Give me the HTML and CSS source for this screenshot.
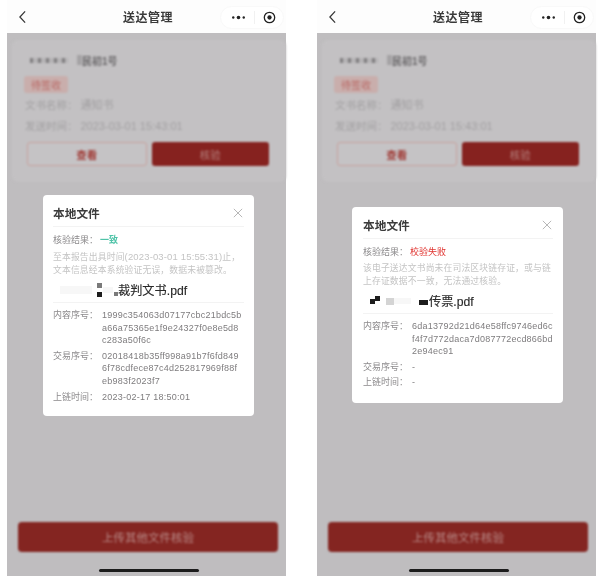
FILE: index.html
```html
<!DOCTYPE html>
<html lang="zh">
<head>
<meta charset="utf-8">
<title>送达管理</title>
<link rel="stylesheet" href="styles.css">
</head>
<body>
<main class="stage">
  <section class="phone">
    <header class="nav">
      <svg class="back" viewBox="0 0 10 16"><path d="M8 1.5 2 8l6 6.5"/></svg>
      <h1 class="nav-title">送达管理</h1>
      <div class="capsule">
        <svg class="more" viewBox="0 0 20 6"><circle cx="3" cy="3" r="1.6"/><circle cx="10" cy="3" r="2.4"/><circle cx="17" cy="3" r="1.6"/></svg>
        <i class="capsule-line"></i>
        <svg class="target" viewBox="0 0 14 14"><circle cx="7" cy="7" r="5.6"/><circle class="dot" cx="7" cy="7" r="2.3"/></svg>
      </div>
    </header>
    <div class="content">
      <article class="card">
        <div class="case"><span class="mask"></span><span class="mask short"></span><span>民初1号</span></div>
        <span class="tag">待签收</span>
        <p class="meta">文书名称：<span class="val">通知书</span></p>
        <p class="meta">发送时间：<span class="val">2023-03-01 15:43:01</span></p>
        <div class="actions"><span class="btn ghost">查看</span><span class="btn solid">核验</span></div>
      </article>
      <div class="footer">
        <span class="upload">上传其他文件核验</span>
        <i class="home"></i>
      </div>
    </div>
    <aside class="modal modal-a">
      <div class="modal-head"><h2>本地文件</h2><svg class="close" viewBox="0 0 12 12"><path d="M1 1l10 10M11 1 1 11"/></svg></div>
      <div class="result"><span class="label">核验结果：</span><span class="ok">一致</span></div>
      <p class="desc">至本报告出具时间<span class="num">(2023-03-01 15:55:31)</span>止，<br>文本信息经本系统验证无误，数据未被篡改。</p>
      <div class="file"><i class="px fade wide"></i><i class="px-stack"><i class="px grey"></i><i class="px dark"></i></i><i class="px fade"></i><i class="px grey low"></i><span>裁判文书.pdf</span></div>
      <dl class="rows">
        <div class="row"><dt>内容序号：</dt><dd>1999c354063d07177cbc21bdc5b<br>a66a75365e1f9e24327f0e8e5d8<br>c283a50f6c</dd></div>
        <div class="row"><dt>交易序号：</dt><dd>02018418b35ff998a91b7f6fd849<br>6f78cdfece87c4d252817969f88f<br>eb983f2023f7</dd></div>
        <div class="row"><dt>上链时间：</dt><dd>2023-02-17 18:50:01</dd></div>
      </dl>
    </aside>
  </section>

  <section class="phone">
    <header class="nav">
      <svg class="back" viewBox="0 0 10 16"><path d="M8 1.5 2 8l6 6.5"/></svg>
      <h1 class="nav-title">送达管理</h1>
      <div class="capsule">
        <svg class="more" viewBox="0 0 20 6"><circle cx="3" cy="3" r="1.6"/><circle cx="10" cy="3" r="2.4"/><circle cx="17" cy="3" r="1.6"/></svg>
        <i class="capsule-line"></i>
        <svg class="target" viewBox="0 0 14 14"><circle cx="7" cy="7" r="5.6"/><circle class="dot" cx="7" cy="7" r="2.3"/></svg>
      </div>
    </header>
    <div class="content">
      <article class="card">
        <div class="case"><span class="mask"></span><span class="mask short"></span><span>民初1号</span></div>
        <span class="tag">待签收</span>
        <p class="meta">文书名称：<span class="val">通知书</span></p>
        <p class="meta">发送时间：<span class="val">2023-03-01 15:43:01</span></p>
        <div class="actions"><span class="btn ghost">查看</span><span class="btn solid">核验</span></div>
      </article>
      <div class="footer">
        <span class="upload">上传其他文件核验</span>
        <i class="home"></i>
      </div>
    </div>
    <aside class="modal modal-b">
      <div class="modal-head"><h2>本地文件</h2><svg class="close" viewBox="0 0 12 12"><path d="M1 1l10 10M11 1 1 11"/></svg></div>
      <div class="result"><span class="label">核验结果：</span><span class="fail">校验失败</span></div>
      <p class="desc">该电子送达文书尚未在司法区块链存证，或与链<br>上存证数据不一致，无法通过核验。</p>
      <div class="file"><i class="px dark"></i><i class="px dark up"></i><i class="px fade mid"></i><i class="px fade"></i><i class="gap"></i><i class="px dark bar"></i><span>传票.pdf</span></div>
      <dl class="rows">
        <div class="row"><dt>内容序号：</dt><dd>6da13792d21d64e58ffc9746ed6c<br>f4f7d772daca7d087772ecd866bd<br>2e94ec91</dd></div>
        <div class="row"><dt>交易序号：</dt><dd>-</dd></div>
        <div class="row"><dt>上链时间：</dt><dd>-</dd></div>
      </dl>
    </aside>
  </section>
</main>
</body>
</html>
```
FILE: styles.css
```css
* { box-sizing: border-box; }
html, body { margin: 0; padding: 0; background: #fff; }
body { font-family: "Liberation Sans", "Noto Sans CJK SC", sans-serif; }
h1, h2, p, dl, dd, dt { margin: 0; font-weight: normal; }
i { display: block; }

.stage { display: flex; gap: 31px; width: 600px; height: 578px; padding-left: 7px; overflow: hidden; }
.phone { position: relative; display: flex; flex-direction: column; flex: none; width: 279px; height: 576px; }

.nav { position: relative; display: flex; align-items: center; justify-content: center; flex: none; height: 33px; padding-left: 3px; background: #fdfdfd; }
.nav-title { font-size: 12px; font-weight: 700; color: #3a3a3a; letter-spacing: .5px; filter: blur(.3px); }
.back { position: absolute; left: 11px; top: 10px; width: 9px; height: 14px; fill: none; stroke: #333; stroke-width: 1.4; }
.capsule { position: absolute; right: 2px; top: 6px; display: flex; align-items: center; justify-content: space-between; width: 64px; height: 23px; padding: 0 7px 0 10px; border: 1px solid #f9f9f9; border-radius: 12px; background: #fff; }
.more { width: 15px; height: 5px; fill: #222; }
.capsule-line { width: 1px; height: 13px; background: #f1f1f1; }
.target { width: 13px; height: 13px; fill: none; stroke: #222; stroke-width: 1.4; }
.target .dot { fill: #222; stroke: none; }

.content { display: flex; flex-direction: column; flex: 1; padding: 7px 0 0 5px; background: #bfbdbf; }
.card { display: flex; flex-direction: column; align-items: flex-start; height: 142px; padding: 11px 0 0 12px; border-radius: 6px; background: #c3c1c3; filter: blur(1px); }
.case { display: flex; align-items: center; gap: 9px; height: 18px; padding-left: 6px; font-size: 10px; font-weight: 700; color: #6a686a; }
.mask { width: 38px; height: 5px; background: repeating-linear-gradient(90deg, #807e80 0 3px, #b5b3b5 3px 8px); }
.mask.short { width: 5px; height: 10px; margin-right: -9px; background: #a5a3a5; }
.tag { display: flex; align-items: center; height: 17px; margin-top: 7px; padding: 0 7px; border-radius: 3px; background: #c9aeac; font-size: 10px; color: #bb6a66; }
.meta { height: 21px; padding-top: 5px; padding-left: 1px; font-size: 10.5px; line-height: 14px; white-space: nowrap; color: #a2a0a2; }
.val { margin-left: 3px; font-size: 11px; }
.actions { display: flex; gap: 5px; width: 242px; margin: 7px 0 0 3px; }
.btn { display: flex; align-items: center; justify-content: center; flex: 1; height: 24px; border-radius: 3px; font-size: 10.5px; }
.ghost { border: 1px solid #c7a19e; background: #c5c3c5; color: #a03a35; font-weight: 700; }
.solid { background: #86221f; color: #b4807d; }

.footer { display: flex; flex-direction: column; align-items: center; margin-top: auto; padding: 0 0 4px; }
.upload { display: flex; align-items: center; justify-content: center; width: 260px; height: 30px; margin-left: -2px; border-radius: 4px; background: #842521; color: #b98b88; font-size: 11.5px; filter: blur(.9px); }
.home { width: 100px; height: 3px; margin-top: 17px; margin-left: -1px; border-radius: 2px; background: #1c1c1c; }

.modal { position: absolute; width: 211px; padding: 0 10px; border-radius: 4px; background: #fff; color: #8c8a8c; font-size: 9px; filter: blur(.3px); }
.modal-a { left: 36px; top: 195px; height: 221px; }
.modal-b { left: 35px; top: 207px; height: 196px; padding-left: 11px; }
.modal-head { display: flex; align-items: center; justify-content: space-between; height: 32px; padding-top: 4px; border-bottom: 1px solid #f3f3f3; }
.modal-head h2 { font-size: 11.7px; font-weight: 700; color: #3b3b3b; }
.close { width: 10px; height: 10px; margin-right: 1px; fill: none; stroke: #a8a8a8; stroke-width: 1; }
.result { height: 16px; margin-top: 5px; line-height: 16px; white-space: nowrap; }
.label { color: #8c8a8c; }
.ok { margin-left: 2px; color: #4fc3a8; font-weight: 700; }
.fail { margin-left: 2px; color: #e0312d; }
.desc { margin-top: 2px; font-size: 8.8px; line-height: 13px; color: #c4c4c4; white-space: nowrap; letter-spacing: .15px; }
.num { font-size: 9.5px; }
.file { display: flex; align-items: center; height: 26px; padding: 1px 0 0 7px; border-bottom: 1px solid #f3f3f3; font-size: 12.2px; color: #2a2a2a; -webkit-text-stroke: .15px #2a2a2a; }
.px { flex: none; width: 5px; height: 5px; }
.px.dark { background: #1d1d1d; }
.px.grey { background: #7a7a7a; }
.px.fade { width: 17px; height: 6px; background: #f7f7f7; }
.px-stack + .px.fade { width: 10px; }
.px.fade.wide { width: 32px; height: 8px; }
.px.fade.mid { width: 8px; height: 7px; margin-left: 5px; background: #d4d4d4; }
.px.low { width: 4px; height: 4px; margin-top: 7px; margin-left: 1px; }
.px.up { margin: -6px 1px 0 0; }
.px.bar { width: 9px; height: 5px; margin-top: 3px; margin-right: 1px; }
.gap { flex: none; width: 8px; }
.px-stack { display: flex; flex-direction: column; gap: 4px; flex: none; margin: 0 1px 0 5px; }
.rows { display: flex; flex-direction: column; gap: 3px; padding-top: 6px; }
.row { display: flex; line-height: 12.6px; }
.row dt { flex: none; width: 49px; white-space: nowrap; }
.row dd { white-space: nowrap; letter-spacing: .24px; color: #7e7c7e; }
```
